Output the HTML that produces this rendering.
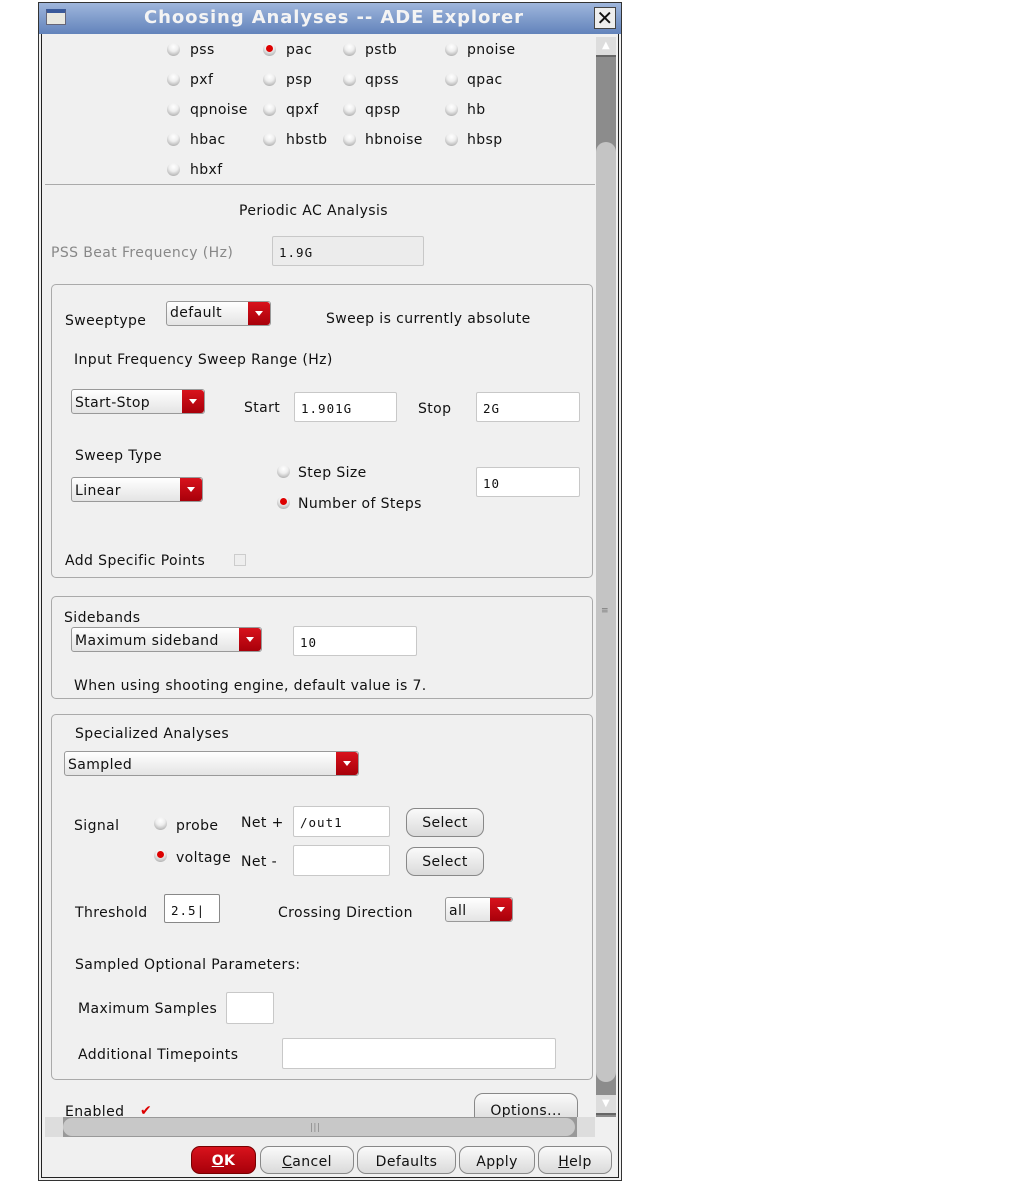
<!DOCTYPE html>
<html><head><meta charset="utf-8"><style>
*{margin:0;padding:0;box-sizing:border-box}
body{width:1013px;height:1185px;background:#fff;position:relative;overflow:hidden;font-family:"DejaVu Sans","Liberation Sans",sans-serif;font-size:14px;letter-spacing:0.4px;color:#111}
.a{position:absolute}
.t{position:absolute;line-height:18px;white-space:nowrap;margin-top:1px}
.rad{position:absolute;width:13px;height:13px;border-radius:50%;background:radial-gradient(circle at 50% 30%,#fff 0,#eee 40%,#999 100%);}
.rad.on::after{content:"";position:absolute;left:3px;top:2px;width:7px;height:7px;border-radius:50%;background:#d00;}
.in{position:absolute;background:#fff;border:1px solid #c8c8c8;border-radius:2px;font-family:"DejaVu Sans Mono","Liberation Mono",monospace;font-size:12.5px;padding-left:6px;letter-spacing:1px}
.grp{position:absolute;border:1px solid #aaa;border-radius:5px}
.cb{position:absolute;border:1px solid #999;border-radius:3px;background:linear-gradient(#fff,#e4e4e4);padding-left:3px;line-height:22px;}
.cb b{position:absolute;right:0;top:0;bottom:0;width:22px;background:linear-gradient(#d8121c,#a8000a);border-radius:0 3px 3px 0}
.cb b::after{content:"";position:absolute;left:7px;top:9px;border-left:4px solid transparent;border-right:4px solid transparent;border-top:5px solid #fff}
.btn{position:absolute;border:1px solid #888;border-radius:9px;background:linear-gradient(#fafafa,#dadada);text-align:center;}
</style></head><body>
<div class="a" style="left:38px;top:2px;width:584px;height:1179px;background:#f0f0f0;border:1px solid #333"></div>
<div class="a" style="left:39px;top:3px;width:582px;height:31px;background:linear-gradient(#9fb6dc,#6283bb)"></div>
<div class="a" style="left:46px;top:9px;width:20px;height:16px;background:#e8e8e0;border:1px solid #667;border-top:4px solid #3a5a9a"></div>
<div class="t" style="left:144px;top:6px;font-size:18px;font-weight:bold;color:#f4f4f4;letter-spacing:0.9px;line-height:22px">Choosing Analyses -- ADE Explorer</div>
<div class="a" style="left:594px;top:7px;width:22px;height:22px;background:#eee;border:1px solid #444;font-size:20px;line-height:20px;text-align:center">✕</div>
<div class="a" style="left:41px;top:34px;width:578px;height:1144px;border:1px solid #222;border-top:none"></div>
<div class="rad" style="left:167px;top:43px"></div><div class="t" style="left:190px;top:40px">pss</div>
<div class="rad on" style="left:263px;top:43px"></div><div class="t" style="left:286px;top:40px">pac</div>
<div class="rad" style="left:343px;top:43px"></div><div class="t" style="left:365px;top:40px">pstb</div>
<div class="rad" style="left:445px;top:43px"></div><div class="t" style="left:467px;top:40px">pnoise</div>
<div class="rad" style="left:167px;top:73px"></div><div class="t" style="left:190px;top:70px">pxf</div>
<div class="rad" style="left:263px;top:73px"></div><div class="t" style="left:286px;top:70px">psp</div>
<div class="rad" style="left:343px;top:73px"></div><div class="t" style="left:365px;top:70px">qpss</div>
<div class="rad" style="left:445px;top:73px"></div><div class="t" style="left:467px;top:70px">qpac</div>
<div class="rad" style="left:167px;top:103px"></div><div class="t" style="left:190px;top:100px">qpnoise</div>
<div class="rad" style="left:263px;top:103px"></div><div class="t" style="left:286px;top:100px">qpxf</div>
<div class="rad" style="left:343px;top:103px"></div><div class="t" style="left:365px;top:100px">qpsp</div>
<div class="rad" style="left:445px;top:103px"></div><div class="t" style="left:467px;top:100px">hb</div>
<div class="rad" style="left:167px;top:133px"></div><div class="t" style="left:190px;top:130px">hbac</div>
<div class="rad" style="left:263px;top:133px"></div><div class="t" style="left:286px;top:130px">hbstb</div>
<div class="rad" style="left:343px;top:133px"></div><div class="t" style="left:365px;top:130px">hbnoise</div>
<div class="rad" style="left:445px;top:133px"></div><div class="t" style="left:467px;top:130px">hbsp</div>
<div class="rad" style="left:167px;top:163px"></div><div class="t" style="left:190px;top:160px">hbxf</div>
<div class="a" style="left:45px;top:184px;width:550px;height:1px;background:#aaa"></div>
<div class="t" style="left:239px;top:201px">Periodic AC Analysis</div>
<div class="t" style="left:51px;top:243px;color:#888">PSS Beat Frequency (Hz)</div>
<div class="in" style="left:272px;top:236px;width:152px;height:30px;background:#ececec;line-height:32px">1.9G</div>
<div class="grp" style="left:51px;top:284px;width:542px;height:294px"></div>
<div class="t" style="left:65px;top:311px">Sweeptype</div>
<div class="cb" style="left:166px;top:301px;width:105px;height:25px">default<b></b></div>
<div class="t" style="left:326px;top:309px">Sweep is currently absolute</div>
<div class="t" style="left:74px;top:350px">Input Frequency Sweep Range (Hz)</div>
<div class="cb" style="left:71px;top:389px;width:134px;height:25px;line-height:26px">Start-Stop<b></b></div>
<div class="t" style="left:244px;top:398px">Start</div>
<div class="in" style="left:294px;top:392px;width:103px;height:30px;line-height:32px">1.901G</div>
<div class="t" style="left:418px;top:399px">Stop</div>
<div class="in" style="left:476px;top:392px;width:104px;height:30px;line-height:32px">2G</div>
<div class="t" style="left:75px;top:446px">Sweep Type</div>
<div class="cb" style="left:71px;top:477px;width:132px;height:25px;line-height:26px">Linear<b></b></div>
<div class="rad" style="left:277px;top:465px"></div><div class="t" style="left:298px;top:463px">Step Size</div>
<div class="rad on" style="left:277px;top:496px"></div><div class="t" style="left:298px;top:494px">Number of Steps</div>
<div class="in" style="left:476px;top:467px;width:104px;height:30px;line-height:32px">10</div>
<div class="t" style="left:65px;top:551px">Add Specific Points</div>
<div class="a" style="left:234px;top:554px;width:12px;height:12px;background:#eee;border:1px solid #ccc"></div>
<div class="grp" style="left:51px;top:596px;width:542px;height:103px"></div>
<div class="t" style="left:64px;top:608px">Sidebands</div>
<div class="cb" style="left:71px;top:627px;width:191px;height:25px;line-height:26px">Maximum sideband<b></b></div>
<div class="in" style="left:293px;top:626px;width:124px;height:30px;line-height:32px">10</div>
<div class="t" style="left:74px;top:676px">When using shooting engine, default value is 7.</div>
<div class="grp" style="left:51px;top:714px;width:542px;height:366px"></div>
<div class="t" style="left:75px;top:724px">Specialized Analyses</div>
<div class="cb" style="left:64px;top:751px;width:295px;height:25px;line-height:26px">Sampled<b></b></div>
<div class="t" style="left:74px;top:816px">Signal</div>
<div class="rad" style="left:154px;top:817px"></div><div class="t" style="left:176px;top:816px">probe</div>
<div class="rad on" style="left:154px;top:849px"></div><div class="t" style="left:176px;top:848px">voltage</div>
<div class="t" style="left:241px;top:813px">Net +</div>
<div class="in" style="left:293px;top:806px;width:97px;height:31px;line-height:31px">/out1</div>
<div class="btn" style="left:406px;top:808px;width:78px;height:29px;line-height:29px">Select</div>
<div class="t" style="left:241px;top:852px">Net -</div>
<div class="in" style="left:293px;top:845px;width:97px;height:31px"></div>
<div class="btn" style="left:406px;top:847px;width:78px;height:29px;line-height:29px">Select</div>
<div class="t" style="left:75px;top:903px">Threshold</div>
<div class="in" style="left:164px;top:894px;width:56px;height:29px;line-height:31px;border-color:#888">2.5|</div>
<div class="t" style="left:278px;top:903px">Crossing Direction</div>
<div class="cb" style="left:445px;top:897px;width:68px;height:25px;line-height:26px">all<b></b></div>
<div class="t" style="left:75px;top:955px">Sampled Optional Parameters:</div>
<div class="t" style="left:78px;top:999px">Maximum Samples</div>
<div class="in" style="left:226px;top:992px;width:48px;height:32px"></div>
<div class="t" style="left:78px;top:1045px">Additional Timepoints</div>
<div class="in" style="left:282px;top:1038px;width:274px;height:31px"></div>
<div class="t" style="left:65px;top:1102px">Enabled</div>
<div class="t" style="left:140px;top:1101px;color:#d00;font-weight:bold">✔</div>
<div class="btn" style="left:474px;top:1093px;width:104px;height:30px;line-height:34px;border-bottom:none;border-radius:9px 9px 0 0">Options...</div>
<div class="a" style="left:596px;top:37px;width:20px;height:1080px;background:#8c8c8c"></div>
<div class="a" style="left:596px;top:37px;width:20px;height:20px;background:#ddd;border-bottom:2px solid #666;text-align:center;color:#fff;font-size:10px;line-height:18px">▲</div>
<div class="a" style="left:596px;top:142px;width:20px;height:940px;background:#c4c4c4;border-radius:10px"></div>
<div class="t" style="left:601px;top:601px;font-size:9px;color:#777">≡</div>
<div class="a" style="left:596px;top:1095px;width:20px;height:20px;background:#ddd;border-bottom:2px solid #666;text-align:center;color:#fff;font-size:10px;line-height:18px">▼</div>
<div class="a" style="left:45px;top:1117px;width:550px;height:20px;background:#999"></div>
<div class="a" style="left:45px;top:1117px;width:18px;height:20px;background:#ddd"></div>
<div class="a" style="left:577px;top:1117px;width:18px;height:20px;background:#ddd"></div>
<div class="a" style="left:63px;top:1118px;width:512px;height:18px;background:#c8c8c8;border-radius:9px"></div>
<div class="t" style="left:310px;top:1118px;font-size:9px;color:#888">|||</div>
<div class="btn" style="left:191px;top:1146px;width:65px;height:28px;line-height:28px;background:linear-gradient(#d8121c,#a8000a);color:#fff;font-weight:bold;border-color:#700"><u>O</u>K</div>
<div class="btn" style="left:260px;top:1146px;width:94px;height:28px;line-height:30px"><u>C</u>ancel</div>
<div class="btn" style="left:357px;top:1146px;width:99px;height:28px;line-height:30px">Defaults</div>
<div class="btn" style="left:459px;top:1146px;width:76px;height:28px;line-height:30px">Apply</div>
<div class="btn" style="left:538px;top:1146px;width:74px;height:28px;line-height:30px"><u>H</u>elp</div>
</body></html>
